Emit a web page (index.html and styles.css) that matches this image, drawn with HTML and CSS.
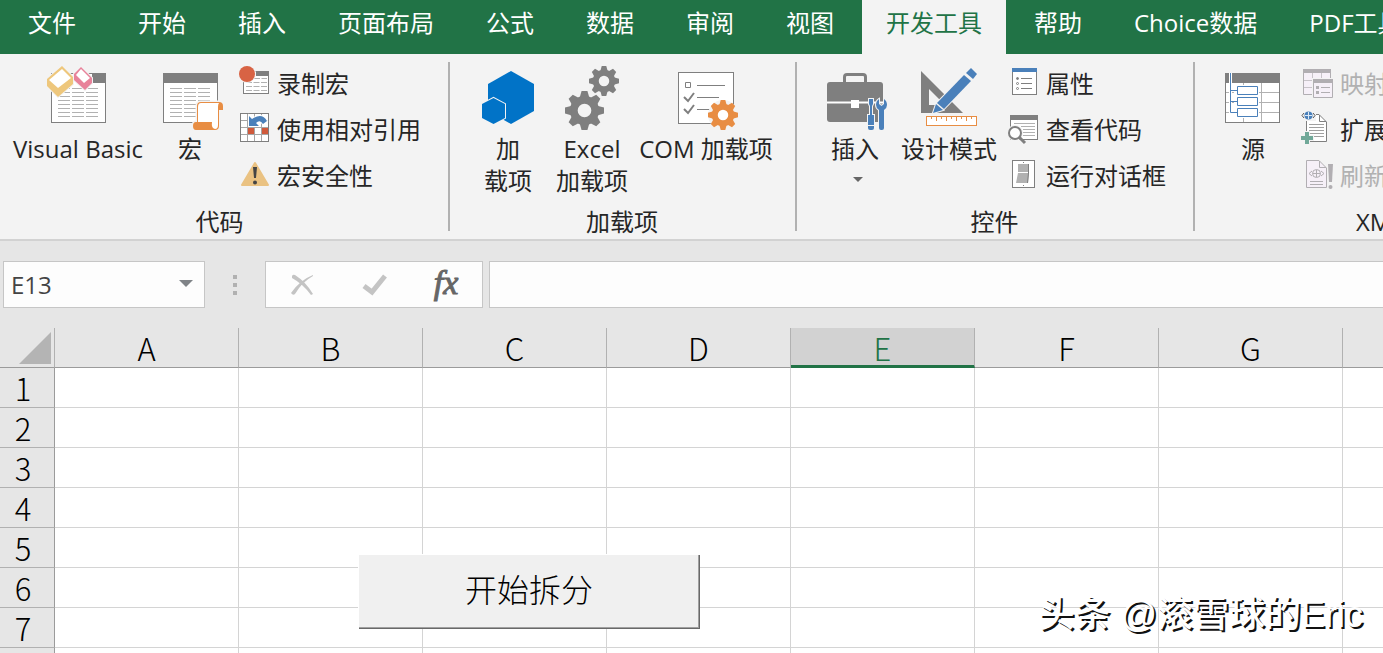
FILE: index.html
```html
<!DOCTYPE html>
<html lang="zh-CN">
	<head>
		<meta charset="utf-8" />
		<title>Excel</title>
		<link rel="stylesheet" href="styles.css">
	</head>
	<body>
		<svg class="defs" width="0" height="0">
			<symbol id="gear" viewBox="-20 -20 40 40">
				<circle r="11" fill="none" stroke="currentColor" stroke-width="8"/>
				<g id="teeth" fill="currentColor">
					<path id="tooth" d="M-5-13L-3-20H3L5-13Z"/>
					<use href="#tooth" transform="rotate(45)"/>
					<use href="#tooth" transform="rotate(90)"/>
					<use href="#tooth" transform="rotate(135)"/>
					<use href="#tooth" transform="rotate(180)"/>
					<use href="#tooth" transform="rotate(225)"/>
					<use href="#tooth" transform="rotate(270)"/>
					<use href="#tooth" transform="rotate(315)"/>
				</g>
			</symbol>
		</svg>

		<div class="tabs">
			<button class="tab file">文件</button>
			<button class="tab">开始</button>
			<button class="tab">插入</button>
			<button class="tab">页面布局</button>
			<button class="tab">公式</button>
			<button class="tab">数据</button>
			<button class="tab">审阅</button>
			<button class="tab">视图</button>
			<button class="tab active">开发工具</button>
			<button class="tab">帮助</button>
			<button class="tab">Choice数据</button>
			<button class="tab">PDF工具集</button>
		</div>

		<div class="ribbon">
			<!-- 代码 -->
			<div class="group group-code">
				<div class="tools">
					<button class="big wide">
						<svg viewBox="0 0 64 64">
							<rect x="5.5" y="7.5" width="54" height="49" fill="#fff" stroke="#7f7f7f"/>
							<path d="M46 7H60V17H46Z" fill="#7f7f7f"/>
							<path d="M12 22.5H52M12 26.5H52M12 30.5H52M12 34.5H52M12 38.5H52M12 42.5H52M12 46.5H52M12 50.5H52" stroke="#b1b1b1" stroke-dasharray="12 2"/>
							<path d="M16 0L1 13V20L12 31L27 18V11Z" fill="#eec77c" stroke="#f3f3f3" stroke-width="2" paint-order="stroke"/>
							<path d="M16 3L3 14L12 22L25 12Z" fill="#fff"/>
							<path d="M35 1L28 8V14L39 24L46 17V12Z" fill="#e8829a" stroke="#f3f3f3" stroke-width="2" paint-order="stroke"/>
							<path d="M35 3L30 9L38 17L44 12Z" fill="#fff"/>
						</svg>
						<span>Visual Basic</span>
					</button>
					<button class="big small-w">
						<svg viewBox="0 0 64 64">
							<rect x="5.5" y="7.5" width="54" height="49" fill="#fff" stroke="#7f7f7f"/>
							<path d="M5 7H60V17H5Z" fill="#7f7f7f"/>
							<path d="M12 22.5H52M12 26.5H52M12 30.5H52M12 34.5H52M12 38.5H52M12 42.5H52M12 46.5H52M12 50.5H52" stroke="#b1b1b1" stroke-dasharray="12 2"/>
							<path d="M39 56V40Q39 36 43 36H61Q65 36 65 40V44H61V60Q61 64 57 64H38Q35 64 35 60T38 56Z" fill="#e88d43" stroke="#f3f3f3" stroke-width="3" paint-order="stroke"/>
							<path d="M40 56V41Q40 37 43 37H61Q60 38 60 41V59Q60 63 57 63Q53 62 54 56Z" fill="#fff"/>
						</svg>
						<span>宏</span>
					</button>
					<div class="rows">
						<button class="row">
							<svg viewBox="0 0 32 32">
								<rect x="5.5" y="3.5" width="25" height="22" fill="#fff" stroke="#7f7f7f"/>
								<path d="M18 3H31V8H18Z" fill="#7f7f7f"/>
								<path d="M16 10.5H29M8 14.5H29M8 18.5H29M8 22.5H29" stroke="#b1b1b1" stroke-dasharray="6 1.5"/>
								<circle cx="9" cy="6" r="8" fill="#d86344" stroke="#f3f3f3" stroke-width="2" paint-order="stroke"/>
							</svg>
							<span>录制宏</span>
						</button>
						<button class="row">
							<svg viewBox="0 0 32 32">
								<rect x="2.5" y="-0.5" width="28" height="28" fill="#fff" stroke="#7f7f7f"/>
								<path d="M9.5 0V27M16.5 0V27M23.5 0V27M3 6.5H30M3 13.5H30M3 20.5H30" stroke="#a6a6a6"/>
								<path d="M10 14H16V20H10ZM24 14H30V20H24Z" fill="#d05a3c"/>
								<path d="M11 2V12H21L18 9Q22 5 25 10L29 7Q24-2 14 5Z" fill="#4a80ba" stroke="#fff" paint-order="stroke" stroke-width="2"/>
							</svg>
							<span>使用相对引用</span>
						</button>
						<button class="row">
							<svg viewBox="0 0 32 32">
								<path d="M17 3L30 25H4Z" fill="#eac282" stroke="#eac282" stroke-width="2" stroke-linejoin="round"/>
								<path d="M15 7H19L18 18H16Z" fill="#444"/>
								<circle cx="17" cy="22.5" r="2" fill="#444"/>
							</svg>
							<span>宏安全性</span>
						</button>
					</div>
				</div>
				<div class="group-name">代码</div>
			</div>

			<!-- 加载项 -->
			<div class="group group-addin">
				<div class="tools">
					<button class="big">
						<svg viewBox="0 0 64 64">
							<path d="M35 5L58 18V45L35 58L12 45V18Z" fill="#0173c7"/>
							<path d="M17.5 32L29 38V52L17.5 58L6 52V38Z" fill="#0173c7" stroke="#f3f3f3" stroke-width="2" paint-order="stroke"/>
						</svg>
						<span>加<br>载项</span>
					</button>
					<button class="big">
						<svg viewBox="0 0 64 64" color="#7f7f7f">
							<use href="#gear" x="5" y="25" width="39" height="39"/>
							<use href="#gear" x="29" y="0" width="30" height="30"/>
						</svg>
						<span>Excel<br>加载项</span>
					</button>
					<button class="big wide">
						<svg viewBox="0 0 64 64">
							<rect x="4.5" y="6.5" width="55" height="51" fill="#fff" stroke="#7f7f7f"/>
							<path d="M11.5 16.5H16.5V21.5H11.5ZM23 19.5H51M23 31.5H45M23 43.5H37" fill="none" stroke="#7f7f7f"/>
							<path d="M10 31L14 35L20 27M10 43L14 47L20 39" fill="none" stroke="#7f7f7f" stroke-width="2"/>
							<circle cx="49" cy="49" r="15" fill="#f3f3f3"/>
							<circle cx="49" cy="49" r="8" fill="#fff"/>
							<use href="#gear" x="34" y="34" width="30" height="30" color="#e88d43"/>
						</svg>
						<span>COM 加载项</span>
					</button>
				</div>
				<div class="group-name">加载项</div>
			</div>

			<!-- 控件 -->
			<div class="group group-control">
				<div class="tools">
					<button class="big insert">
						<svg viewBox="0 0 64 64">
							<path d="M21.5 17V11Q21.5 8.5 24 8.5H40Q42.5 8.5 42.5 11V17" fill="none" stroke="#7f7f7f" stroke-width="3"/>
							<rect x="4" y="16" width="56" height="40" rx="3" fill="#7f7f7f"/>
							<path d="M4 36.5H60" stroke="#fff" stroke-width="2"/>
							<path d="M28 34H36V42H28Z" fill="#fff"/>
							<g fill="#4a80ba" stroke="#f3f3f3" stroke-width="2" paint-order="stroke">
								<path d="M46 33H50V38L49 40V49H51V62Q51 64 49 64H47Q45 64 45 62V49H47V40L46 38Z"/>
								<path d="M56 33V38L58.5 40L61 38V33Q64 35 64 39Q64 42 61 44V62Q61 64 59 64H58Q56 64 56 62V44Q53 42 53 39Q53 35 56 33Z"/>
							</g>
							<path d="M45 59.5H51" stroke="#f3f3f3"/>
						</svg>
						<span>插入</span>
						<svg class="caret" viewBox="0 0 10 6"><path d="M0 0H10L5 5Z" fill="#666"/></svg>
					</button>
					<button class="big design">
						<svg viewBox="0 0 64 64">
							<path d="M4 5L46 47H4ZM12 23V39H28Z" fill="#7f7f7f" fill-rule="evenodd"/>
							<g fill="#4a80ba" stroke="#f3f3f3" stroke-width="2" paint-order="stroke">
								<path d="M19 38L16 47L26 44Z"/>
								<path d="M20 37L47 9L54 15L27 43Z"/>
								<path d="M49 7L54 2L60 8L56 13Z"/>
							</g>
							<rect x="9.5" y="50.5" width="50" height="9" fill="#fff" stroke="#e88d43"/>
							<path d="M14.5 51V53M19.5 51V55M24.5 51V53M29.5 51V55M34.5 51V53M39.5 51V55M44.5 51V53M49.5 51V55M54.5 51V53" stroke="#e88d43"/>
						</svg>
						<span>设计模式</span>
					</button>
					<div class="rows">
						<button class="row">
							<svg viewBox="0 0 32 32">
								<rect x="5.5" y="0.5" width="24" height="26" fill="#fff" stroke="#7f7f7f"/>
								<path d="M5 0H30V4H5Z" fill="#4a80ba"/>
								<path d="M14 10.5H25M14 15.5H25M14 20.5H25" stroke="#7f7f7f"/>
								<g fill="none" stroke="#7f7f7f">
									<circle cx="10.5" cy="10.5" r="1" fill="#7f7f7f"/>
									<circle cx="10.5" cy="15.5" r="1"/>
									<circle cx="10.5" cy="20.5" r="1"/>
								</g>
							</svg>
							<span>属性</span>
						</button>
						<button class="row">
							<svg viewBox="0 0 32 32">
								<rect x="3.5" y="1.5" width="27" height="24" fill="#fff" stroke="#7f7f7f"/>
								<path d="M3 1H31V6H3Z" fill="#7f7f7f"/>
								<path d="M7 9.5H28M14 12.5H28M16 15.5H28M16 18.5H28M16 21.5H28" stroke="#b1b1b1"/>
								<circle cx="8" cy="19" r="8" fill="#f3f3f3"/>
								<circle cx="8" cy="19" r="6" fill="#fff" stroke="#7f7f7f" stroke-width="2"/>
								<path d="M12 23L18 29" stroke="#7f7f7f" stroke-width="3"/>
							</svg>
							<span>查看代码</span>
						</button>
						<button class="row">
							<svg viewBox="0 0 32 32">
								<rect x="5.5" y="0.5" width="22" height="27" fill="#fff" stroke="#7f7f7f"/>
								<path d="M11 4H22V12H11ZM11 13H22L21 23H9Z" fill="#b1b1b1"/>
								<path d="M21.5 4V13L20.5 23M16 2.5H17M16 25.5H17" stroke="#7f7f7f" fill="none"/>
							</svg>
							<span>运行对话框</span>
						</button>
					</div>
				</div>
				<div class="group-name">控件</div>
			</div>

			<!-- XML -->
			<div class="group group-xml">
				<div class="tools">
					<button class="big small-w">
						<svg viewBox="0 0 64 64">
							<rect x="4.5" y="7.5" width="54" height="49" fill="#fff" stroke="#7f7f7f"/>
							<path d="M22.5 17V56M40.5 17V56M5 26.5H58M5 36.5H58M5 46.5H58" stroke="#b1b1b1"/>
							<path d="M4 7H59V17H4Z" fill="#7f7f7f"/>
							<path d="M9.5 7V47" stroke="#fff" stroke-width="3"/>
							<path d="M13 19H38V52H13Z" fill="#fff"/>
							<path d="M9.5 7V46.5H16.5M9.5 24.5H16.5M9.5 35.5H16.5M16.5 20.5H36.5V28.5H16.5ZM16.5 31.5H36.5V39.5H16.5ZM16.5 42.5H36.5V50.5H16.5Z" fill="none" stroke="#4a80ba"/>
						</svg>
						<span>源</span>
					</button>
					<div class="rows">
						<button class="row" disabled>
							<svg viewBox="0 0 32 32">
								<path d="M2.5 1.5H29.5V26.5H2.5Z" fill="#f6f0f8" stroke="#b1aeb2"/>
								<path d="M2 1H30V5H2Z" fill="#b1aeb2"/>
								<path d="M11.5 5V26M20.5 5V12M3 12.5H12M3 19.5H12" stroke="#c8c4c9"/>
								<path d="M11 10H33V31H11Z" fill="#f3f3f3"/>
								<path d="M12.5 11.5H31.5V29.5H12.5Z" fill="#f6f0f8" stroke="#b1aeb2"/>
								<path d="M12 11H32V15H12ZM15 18H18V21H15ZM15 23H18V26H15Z" fill="#b1aeb2"/>
								<path d="M20 19.5H29M20 24.5H29" stroke="#b1aeb2"/>
							</svg>
							<span>映射属性</span>
						</button>
						<button class="row">
							<svg viewBox="0 0 32 32">
								<path d="M5.5 0.5H18L25.5 8V27.5H5.5Z" fill="#fff" stroke="#7f7f7f"/>
								<path d="M18.5 1V7.5H25" fill="none" stroke="#7f7f7f"/>
								<path d="M8 10.5H23M8 13.5H23M8 16.5H23M8 19.5H23M12 22.5H23" stroke="#a0a0a0"/>
								<path d="M0-3H15V7H0Z" fill="#f3f3f3"/>
								<circle cx="7.5" cy="1.5" r="4" fill="#4a80ba"/>
								<path d="M4 1.5H11M7.5-2V5" stroke="#dbe8f5"/>
								<path d="M3-1L1 1.5L3 4M12-1L14 1.5L12 4" fill="none" stroke="#555"/>
								<path d="M4 18H8V22H12V26H8V30H4V26H0V22H4Z" fill="#70a898" stroke="#f3f3f3" stroke-width="2" paint-order="stroke"/>
							</svg>
							<span>扩展包</span>
						</button>
						<button class="row" disabled>
							<svg viewBox="0 0 32 32">
								<path d="M5.5 0.5H18L25.5 8V27.5H5.5Z" fill="#f6f0f8" stroke="#b1aeb2"/>
								<path d="M18.5 1V7.5H25M11 11L8 13.5L11 16M20 11L23 13.5L20 16M9 21.5H22M9 24.5H22" fill="none" stroke="#b1aeb2"/>
								<circle cx="15.5" cy="13.5" r="4" fill="none" stroke="#b1aeb2"/>
								<path d="M12 13.5H19M15.5 10V17" stroke="#b1aeb2"/>
								<path d="M27 4H32L31 22H28Z" fill="#b1aeb2"/>
								<circle cx="29.5" cy="27" r="2" fill="#b1aeb2"/>
							</svg>
							<span>刷新数据</span>
						</button>
					</div>
				</div>
				<div class="group-name">XML</div>
			</div>
		</div>

		<div class="formula-bar">
			<div class="name-box">
				<input type="text" value="E13" aria-label="名称框">
				<button aria-label="展开"><svg width="14" height="8"><path d="M0 0H14L7 7Z" fill="#7f8387"/></svg></button>
			</div>
			<div class="dots"><i></i><i></i><i></i></div>
			<div class="fx-box">
				<button aria-label="取消">
					<svg width="22" height="22"><path d="M1 2Q2 0 4 1Q15 8 22 20L20 21Q12 10 1 4ZM22 2Q11 8 4 20Q2 22 0 19Q9 6 22 1Z" fill="#c4c4c4"/></svg>
				</button>
				<button aria-label="输入">
					<svg width="24" height="22"><path d="M2 12L10 18L23 2" fill="none" stroke="#c4c4c4" stroke-width="5"/></svg>
				</button>
				<button class="fx" aria-label="插入函数">fx</button>
			</div>
			<input class="formula" type="text" aria-label="编辑栏">
		</div>

		<div class="sheet">
			<table>
				<thead>
					<tr>
						<th class="corner"><svg width="32" height="32"><path d="M32 0V32H0Z" fill="#b4b4b4"/></svg></th>
						<th>A</th><th>B</th><th>C</th><th>D</th><th class="on">E</th><th>F</th><th>G</th><th></th>
					</tr>
				</thead>
				<tbody>
					<tr><th>1</th><td></td><td></td><td></td><td></td><td></td><td></td><td></td><td></td></tr>
					<tr><th>2</th><td></td><td></td><td></td><td></td><td></td><td></td><td></td><td></td></tr>
					<tr><th>3</th><td></td><td></td><td></td><td></td><td></td><td></td><td></td><td></td></tr>
					<tr><th>4</th><td></td><td></td><td></td><td></td><td></td><td></td><td></td><td></td></tr>
					<tr><th>5</th><td></td><td></td><td></td><td></td><td></td><td></td><td></td><td></td></tr>
					<tr><th>6</th><td></td><td></td><td></td><td></td><td></td><td></td><td></td><td></td></tr>
					<tr><th>7</th><td></td><td></td><td></td><td></td><td></td><td></td><td></td><td></td></tr>
					<tr><th></th><td></td><td></td><td></td><td></td><td></td><td></td><td></td><td></td></tr>
				</tbody>
			</table>
			<button class="split">开始拆分</button>
			<div class="watermark">头条 @滚雪球的Eric</div>
		</div>
	</body>
</html>
```
FILE: styles.css
```css
*{
	box-sizing: border-box;
}

body{
	display: flex;
	flex-direction: column;
	margin: 0;
	height: 100vh;
	overflow: hidden;
	background-color: #e6e6e6;
	font-family: "Open Sans", "Noto Sans CJK SC", sans-serif;
	font-size: 24px;
	line-height: 32px;
	color: #262626;
}

button, input{
	margin: 0;
	padding: 0;
	border: none;
	background: none;
	font: inherit;
	color: inherit;
}

svg{
	display: block;
	overflow: visible;
}

.defs{
	position: absolute;
}

/*选项卡*/
.tabs{
	display: flex;
	flex: none;
	height: 54px;
	overflow: hidden;
	background-color: #217346;
}

.tab{
	flex: none;
	margin: 0 2px;
	padding: 0 24px 8px;
	color: #fff;
	white-space: nowrap;
}

.tab.file{
	margin-left: 0;
	padding: 0 34px 8px 28px;
}

.tab.active{
	background-color: #f3f3f3;
	color: #217346;
}

/*功能区*/
.ribbon{
	display: flex;
	flex: none;
	overflow: hidden;
	background-color: #f3f3f3;
	border-bottom: 2px solid #d2d2d2;
}

.group{
	flex: none;
	position: relative;
}

.group::after{
	content: "";
	position: absolute;
	top: 8px;
	right: 0;
	bottom: 8px;
	width: 2px;
	background-color: #b1b1b1;
}

.group-code{
	padding: 0 17px 0 6px;
}

.group-addin{
	padding: 0 19px 0 16px;
}

.group-control{
	padding: 0 17px 0 14px;
}

.group-xml{
	min-width: 370px;
	padding: 0 18px;
}

.tools{
	display: flex;
	height: 152px;
}

.group-name{
	height: 33px;
	text-align: center;
}

.big{
	display: flex;
	flex-direction: column;
	align-items: center;
	width: 84px;
	padding-top: 12px;
	white-space: nowrap;
}

.big svg{
	width: 64px;
	height: 64px;
	margin-bottom: 3px;
}

.big.wide{
	width: 144px;
}

.big.small-w{
	width: 80px;
}

.big.insert{
	width: 88px;
}

.big.design{
	width: 100px;
}

.big .caret{
	width: 10px;
	height: 6px;
	margin: 12px 0 0 6px;
}

.rows{
	display: flex;
	flex-direction: column;
	padding: 7px 12px 0 8px;
}

.row{
	display: flex;
	align-items: center;
	gap: 7px;
	height: 46px;
	white-space: nowrap;
}

.row svg{
	width: 32px;
	height: 32px;
}

.row:disabled{
	color: #b1b1b1;
}

/*编辑栏*/
.formula-bar{
	display: flex;
	flex: none;
	height: 87px;
	padding: 20px 0 20px 3px;
}

.name-box, .fx-box, .formula{
	background-color: #fdfdfd;
	border: 1px solid #c6c6c6;
}

.name-box{
	display: flex;
	width: 202px;
	color: #444;
}

.name-box input{
	flex: 1;
	min-width: 0;
	padding-left: 7px;
}

.name-box button{
	padding: 0 11px 2px;
}

.dots{
	display: flex;
	flex-direction: column;
	justify-content: center;
	align-items: center;
	gap: 4px;
	width: 60px;
}

.dots i{
	width: 4px;
	height: 4px;
	background-color: #b1b1b1;
}

.fx-box{
	display: flex;
	width: 218px;
	margin-right: 6px;
}

.fx-box button{
	display: flex;
	flex: 1;
	align-items: center;
	justify-content: center;
}

.fx-box .fx{
	padding-bottom: 4px;
	font-family: "Liberation Serif", serif;
	font-size: 34px;
	font-style: italic;
	color: #666;
	-webkit-text-stroke: 1px #666;
}

.formula{
	flex: 1;
	min-width: 0;
	padding: 0 8px;
	border-right: none;
}

/*表格*/
.sheet{
	flex: 1;
	position: relative;
	overflow: hidden;
}

table{
	width: 1527px;
	table-layout: fixed;
	border-spacing: 0;
	background-color: #fff;
}

th, td{
	height: 40px;
	padding: 0;
	border-right: 1px solid #d4d4d4;
	border-bottom: 1px solid #d4d4d4;
}

th{
	background-color: #e6e6e6;
	border-color: #9b9b9b;
	font-family: "Noto Sans CJK SC", sans-serif;
	font-size: 31px;
	font-weight: 300;
	color: #000;
}

thead th{
	border-right-color: #b1b1b1;
}

tbody th{
	padding-right: 8px;
	border-bottom-color: #b1b1b1;
}

.corner{
	width: 55px;
	padding: 0 3px 0 0;
}

.corner svg{
	margin-left: auto;
}

th.on{
	padding-top: 2px;
	background-color: #d2d2d2;
	border-bottom: 3px solid #217346;
	color: #217346;
}

.split{
	position: absolute;
	top: 227px;
	left: 359px;
	width: 341px;
	height: 74px;
	padding-bottom: 8px;
	background-color: #f0f0f0;
	border-right: 1px solid #696969;
	border-bottom: 1px solid #696969;
	box-shadow: inset -1px -1px #a0a0a0, -1px -1px #fff;
	font-family: "Noto Sans CJK SC", sans-serif;
	font-size: 32px;
	font-weight: 300;
	color: #000;
}

.watermark{
	position: absolute;
	right: 20px;
	bottom: 16px;
	font-family: "Liberation Sans", "Noto Sans CJK SC", sans-serif;
	font-size: 36px;
	line-height: 44px;
	font-weight: 500;
	color: #fff;
	text-shadow: 2px 2px #111;
}
```
